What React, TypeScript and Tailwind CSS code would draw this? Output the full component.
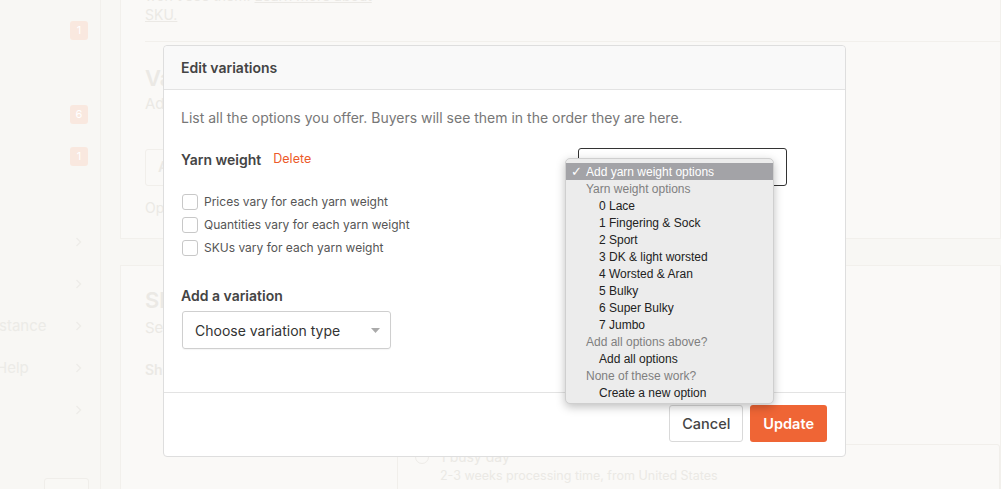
import React from "react";

const menuItems: { label: string; kind: "head" | "item" | "selected" }[] = [
  { label: "Add yarn weight options", kind: "selected" },
  { label: "Yarn weight options", kind: "head" },
  { label: "0 Lace", kind: "item" },
  { label: "1 Fingering & Sock", kind: "item" },
  { label: "2 Sport", kind: "item" },
  { label: "3 DK & light worsted", kind: "item" },
  { label: "4 Worsted & Aran", kind: "item" },
  { label: "5 Bulky", kind: "item" },
  { label: "6 Super Bulky", kind: "item" },
  { label: "7 Jumbo", kind: "item" },
  { label: "Add all options above?", kind: "head" },
  { label: "Add all options", kind: "item" },
  { label: "None of these work?", kind: "head" },
  { label: "Create a new option", kind: "item" },
];

function Chevron() {
  return (
    <svg width="7" height="10" viewBox="0 0 7 10" className="text-[#eeece8]">
      <path d="M1.5 1l4 4-4 4" fill="none" stroke="currentColor" strokeWidth="1.3" />
    </svg>
  );
}

function Badge({ n }: { n: string }) {
  return (
    <div className="w-[18px] h-[19px] rounded-[3px] bg-[#f9e8df] text-white text-[11px] flex items-center justify-center">
      {n}
    </div>
  );
}

function Sidebar() {
  return (
    <aside className="w-[101px] shrink-0 border-r border-[#f2f0ec] bg-[#f8f7f4] overflow-hidden text-[15px] text-[#ecebe7]">
      <div className="flex justify-end pr-[12px] pt-[21px]">
        <Badge n="1" />
      </div>
      <div className="flex justify-end pr-[12px] pt-[65px]">
        <Badge n="6" />
      </div>
      <div className="flex justify-end pr-[12px] pt-[23px]">
        <Badge n="1" />
      </div>
      <div className="flex flex-col pr-[18px] mt-[55px]">
        <div className="h-[42px] flex items-center justify-end"><Chevron /></div>
        <div className="h-[42px] flex items-center justify-end"><Chevron /></div>
        <div className="h-[42px] flex items-center justify-between">
          <span className="-ml-[1px]">stance</span>
          <Chevron />
        </div>
        <div className="h-[42px] flex items-center justify-between">
          <span className="-ml-[4px]">Help</span>
          <Chevron />
        </div>
        <div className="h-[42px] flex items-center justify-end"><Chevron /></div>
      </div>
      <div className="ml-[44px] mt-[47px] w-[45px] h-[30px] border border-[#f0eeea] rounded-[3px] bg-[#f9f8f5]" />
    </aside>
  );
}

function Background() {
  return (
    <div className="flex h-full bg-[#f8f7f4] font-['Inter',sans-serif]">
      <Sidebar />
      <main className="flex-1 pl-[19px] overflow-hidden">
        <section className="-mt-[14px] h-[253px] border border-[#f2f0ec] border-t-0 bg-[#faf9f7] pl-[24px] text-[#ebe9e5]">
          <p className="text-[14px] leading-[19px] whitespace-nowrap">
            won't see them. <span className="underline">Learn more about</span>
            <br />
            <span className="underline">SKU.</span>
          </p>
          <div className="mt-[17px] border-t border-[#f2f0ec]" />
          <h2 className="mt-[23px] text-[22px] font-semibold leading-[26px]">Variations</h2>
          <p className="mt-[2px] text-[15px] leading-[22px]">Add available options like color or size.</p>
          <div className="mt-[34px] w-[180px] h-[37px] border border-[#f1efeb] rounded-[3px] flex items-center pl-[12px] text-[15px] font-semibold">
            Add a variation
          </div>
          <p className="mt-[11px] text-[14px]">Optional</p>
        </section>
        <section className="mt-[26px] h-[260px] border border-[#f2f0ec] bg-[#faf9f7] pl-[24px] text-[#ebe9e5]">
          <h2 className="mt-[21px] text-[22px] font-semibold leading-[26px]">Shipping</h2>
          <p className="mt-[4px] text-[15px] leading-[22px] whitespace-nowrap">
            Set shipping costs and processing times so buyers know what to expect about shipping rates.
          </p>
          <p className="mt-[20px] text-[14px] font-semibold">Shipping options</p>
          <div className="ml-[252px] mt-[64px] h-[60px] border border-[#f1efeb] rounded-[3px] pl-[17px] pt-[1px]">
            <div className="flex items-center gap-[11px] text-[14px]">
              <span className="w-[14px] h-[14px] rounded-full border border-[#eeece8]" />
              <span>1 busy day</span>
            </div>
            <p className="text-[12.5px] mt-[0px] ml-[25px] text-[#ebe9e5]">2-3 weeks processing time, from United States</p>
          </div>
        </section>
      </main>
    </div>
  );
}

function Checkbox({ label }: { label: string }) {
  return (
    <label className="flex items-center gap-[6px] h-[23px]">
      <span className="w-[16px] h-[16px] border border-[#c8c8c8] rounded-[3px] bg-white" />
      <span className="text-[12px] text-[#555]">{label}</span>
    </label>
  );
}

function Modal() {
  return (
    <div className="absolute left-[163px] top-[45px] w-[683px] h-[412px] bg-white border border-[#dedede] rounded-[4px] flex flex-col font-['Inter',sans-serif]">
      <header className="h-[44px] bg-[#f9f9f9] border-b border-[#e3e3e3] rounded-t-[4px] flex items-center px-[17px]">
        <h1 className="text-[14px] font-semibold text-[#444]">Edit variations</h1>
      </header>
      <div className="flex-1 px-[17px] pt-[17px]">
        <p className="text-[14px] text-[#777]">
          List all the options you offer. Buyers will see them in the order they are here.
        </p>
        <div className="flex items-start mt-[21px]">
          <div className="flex-1">
            <div className="flex items-center gap-[12px] h-[20px]">
              <span className="text-[14px] font-semibold text-[#444]">Yarn weight</span>
              <span className="text-[12.5px] text-[#ec5a2a]">Delete</span>
            </div>
            <div className="mt-[21px] pl-[1px]">
              <Checkbox label="Prices vary for each yarn weight" />
              <Checkbox label="Quantities vary for each yarn weight" />
              <Checkbox label="SKUs vary for each yarn weight" />
            </div>
          </div>
          <div className="w-[209px] h-[38px] -mt-[1px] mr-[41px] border border-[#333] rounded-[3px]" />
        </div>
        <h3 className="mt-[26px] text-[14px] font-semibold text-[#444]">Add a variation</h3>
        <div className="mt-[5px] ml-[1px] w-[209px] h-[38px] border border-[#cfcfcf] rounded-[3px] flex items-center justify-between pl-[12px] pr-[10px] shadow-[0_1px_1px_rgba(0,0,0,0.04)]">
          <span className="text-[14px] text-[#333]">Choose variation type</span>
          <svg width="9" height="5" viewBox="0 0 9 5"><path d="M0 0h9L4.5 5z" fill="#aaa" /></svg>
        </div>
      </div>
      <footer className="h-[64px] border-t border-[#e3e3e3] flex items-start justify-end gap-[7px] pt-[12px] pr-[18px]">
        <button className="h-[37px] px-[12px] bg-white border border-[#d9d9d9] rounded-[3px] text-[14.5px] font-medium text-[#444]">
          Cancel
        </button>
        <button className="h-[37px] px-[13px] bg-[#ef6535] rounded-[3px] text-[14.5px] font-semibold text-white">
          Update
        </button>
      </footer>
    </div>
  );
}

function NativeMenu() {
  return (
    <div className="absolute left-[565px] top-[158px] w-[209px] bg-[#ececec] border border-[#cfcfcf] rounded-[5px] pt-[4px] pb-[2px] shadow-[0_3px_10px_rgba(0,0,0,0.25)] font-['Liberation_Sans',Arial,sans-serif] text-[12px]">
      {menuItems.map((it) => (
        <div
          key={it.label}
          className={
            it.kind === "selected"
              ? "h-[17px] flex items-center bg-[#a3a3a7] text-white pl-[5px]"
              : it.kind === "head"
              ? "h-[17px] flex items-center text-[#7f7f7f] pl-[20px]"
              : "h-[17px] flex items-center text-[#222] pl-[33px]"
          }
        >
          {it.kind === "selected" && <span className="w-[15px] text-[13px]">✓</span>}
          {it.label}
        </div>
      ))}
    </div>
  );
}

export default function App() {
  return (
    <div className="relative w-full h-[489px] overflow-hidden">
      <Background />
      <Modal />
      <NativeMenu />
    </div>
  );
}
